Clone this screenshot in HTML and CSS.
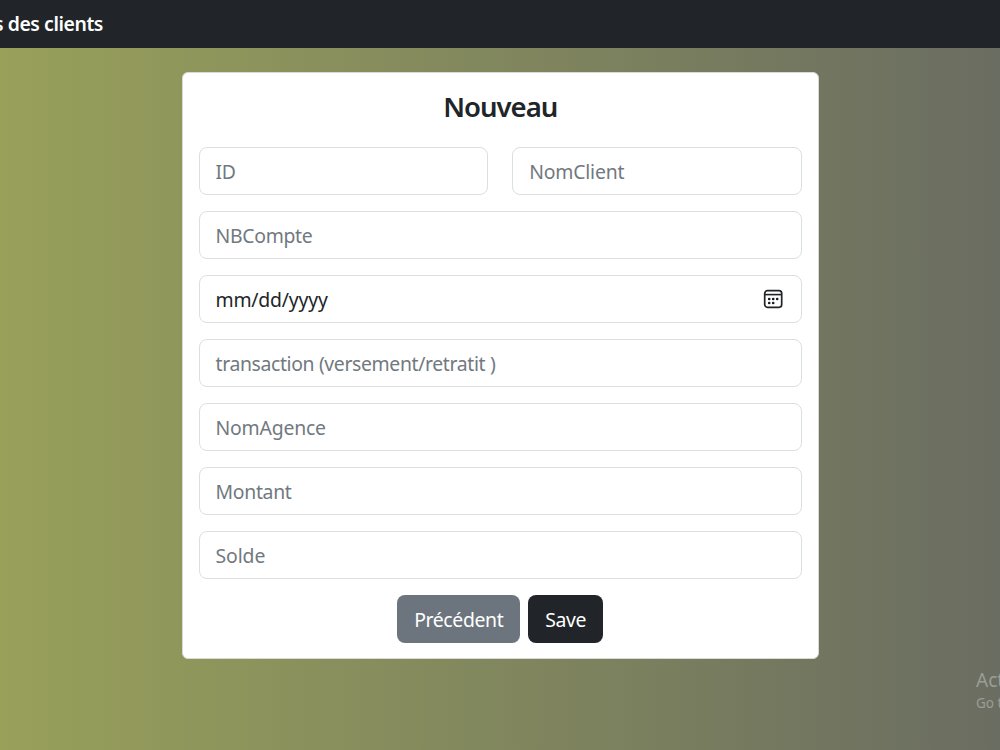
FILE: index.html
```html
<!DOCTYPE html>
<html lang="fr">
<head>
<meta charset="utf-8">
<title>Nouveau</title>
<link rel="stylesheet" href="styles.css">
</head>
<body>
<header class="navbar"><span class="brand">s des clients</span></header>
<main class="page">
  <form class="card">
    <h1 class="title">Nouveau</h1>
    <div class="row">
      <div class="field"><span class="txt t-id">ID</span></div>
      <div class="field"><span class="txt t-nom">NomClient</span></div>
    </div>
    <div class="field"><span class="txt t-nb">NBCompte</span></div>
    <div class="field date"><span class="txt t-date">mm/dd/yyyy</span>
      <svg class="calendar" viewBox="0 0 20 20" width="20" height="20"><rect x="1.7" y="1.7" width="17" height="16.6" rx="2.7" fill="none" stroke="#212326" stroke-width="1.7"/><path d="M2 5.6h16.5" stroke="#212326" stroke-width="1.6"/><g fill="#151719"><circle cx="6.2" cy="10" r="1.3"/><circle cx="10.2" cy="10" r="1.3"/><circle cx="14.2" cy="10" r="1.3"/><circle cx="6.2" cy="14" r="1.3"/><circle cx="10.2" cy="14" r="1.3"/></g></svg>
    </div>
    <div class="field"><span class="txt t-trans">transaction (versement/retratit )</span></div>
    <div class="field"><span class="txt t-ag">NomAgence</span></div>
    <div class="field"><span class="txt t-mont">Montant</span></div>
    <div class="field"><span class="txt t-solde">Solde</span></div>
    <div class="actions">
      <button type="button" class="btn secondary">Précédent</button>
      <button type="button" class="btn dark">Save</button>
    </div>
  </form>
</main>
<aside class="watermark"><div class="wm-title">Act</div><div class="wm-sub">Go t</div></aside>
</body>
</html>
```
FILE: styles.css
```css
* { box-sizing: border-box; }
body { margin: 0; height: 750px; overflow: hidden; font-family: "Noto Sans", "Open Sans", sans-serif; font-size: 19.4px; color: #212529; background: linear-gradient(90deg, #98a05a, #6a6d61); }
.navbar { height: 48px; background: #212529; color: #fff; font-weight: 600; line-height: 47px; white-space: nowrap; }
.brand { display: block; margin-left: -6px; letter-spacing: -.43px; }
.page { padding: 24px 181px 0 182px; }
.card { height: 587px; padding: 16px 16px 0 15.5px; background: #fff; border: 1px solid #d9dad6; border-radius: 6px; display: flex; flex-direction: column; gap: 16px; }
.title { margin: 0; height: 42px; flex-shrink: 0; line-height: 36px; font-size: 27.5px; font-weight: 600; letter-spacing: -1px; text-align: center; }
.row { display: grid; grid-template-columns: 1fr 1fr; gap: 24px; }
.field { height: 48px; flex-shrink: 0; border: 1px solid #dadfe2; border-radius: 8px; padding: 0 16px; color: #717980; display: flex; align-items: center; justify-content: space-between; }
.txt { white-space: nowrap; letter-spacing: -.2px; }
.t-id { letter-spacing: -.4px; }
.t-nb { letter-spacing: -.3px; }
.t-trans { letter-spacing: -.36px; }
.t-mont { letter-spacing: -.3px; }
.t-solde { letter-spacing: -.1px; }
.date { color: #212529; padding-right: 18px; }
.calendar { flex-shrink: 0; }
.actions { display: flex; justify-content: center; gap: 8px; }
.btn { height: 48px; border: 0; border-radius: 8px; padding: 0; color: #fff; font: inherit; letter-spacing: -.35px; }
.secondary { width: 123px; background: #6c757d; }
.dark { width: 75px; background: #212529; }
.watermark { position: absolute; left: 976px; top: 668px; width: 24px; overflow: hidden; color: #9b9d96; white-space: nowrap; }
.wm-title { font-size: 19px; line-height: 24px; }
.wm-sub { font-size: 13.5px; line-height: 22px; }
```
